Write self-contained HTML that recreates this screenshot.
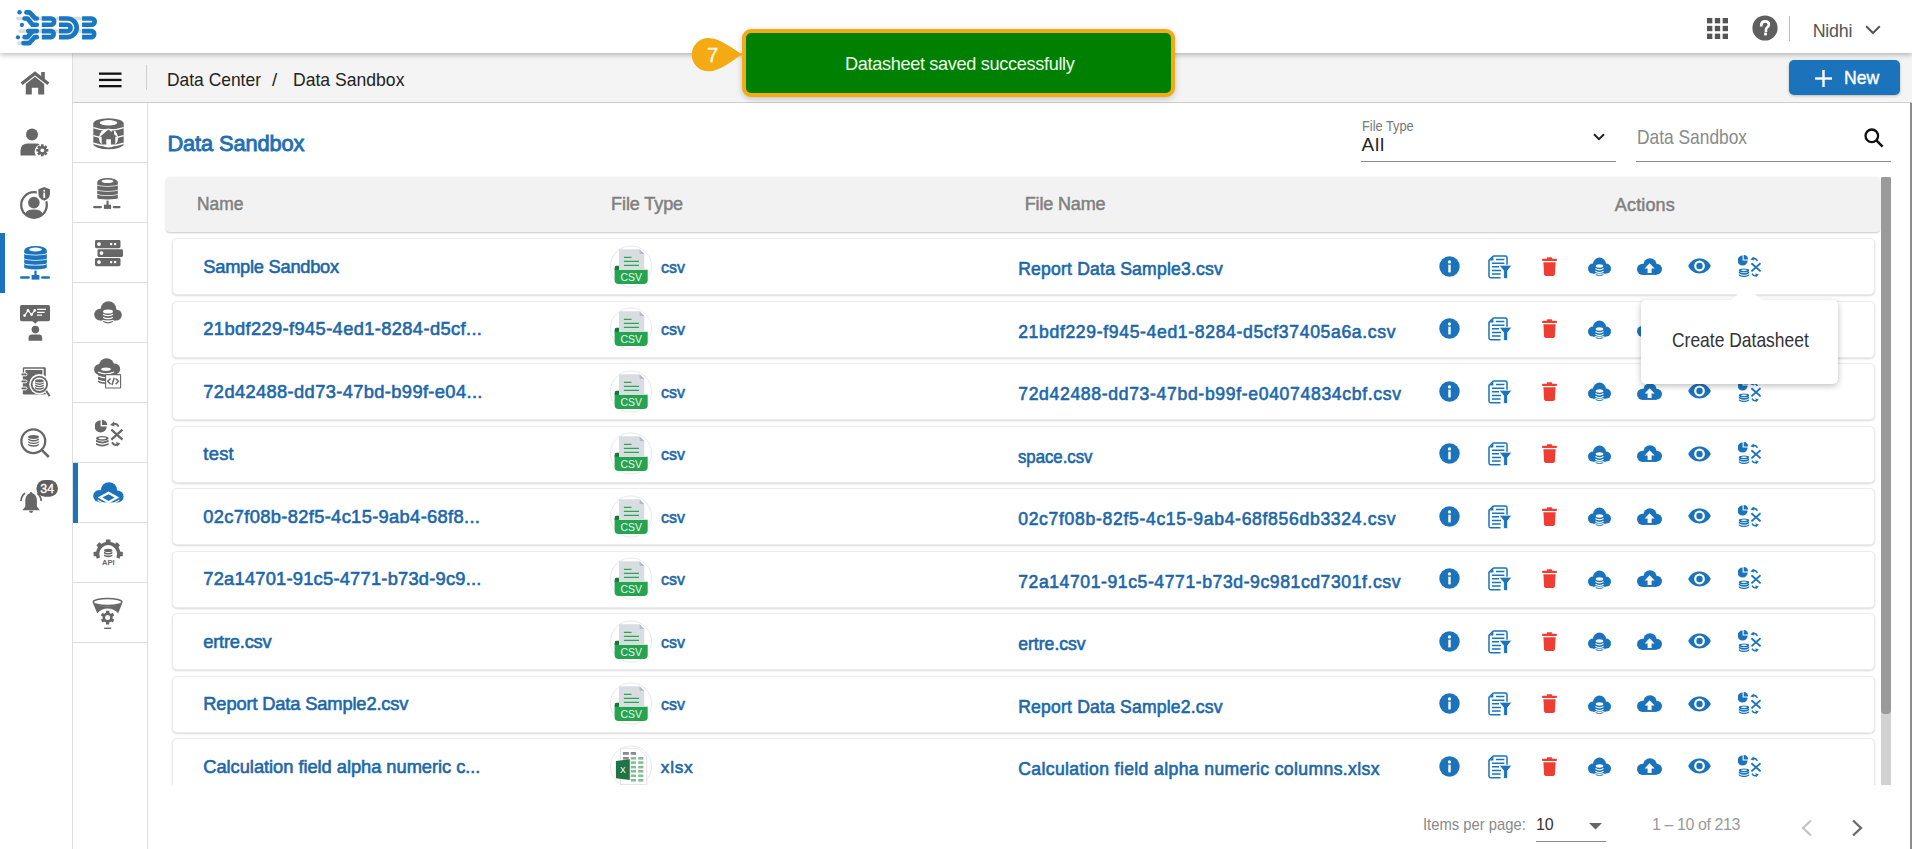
<!DOCTYPE html>
<html><head><meta charset="utf-8">
<style>
*{box-sizing:border-box;margin:0;padding:0}
html,body{width:1912px;height:849px;overflow:hidden;background:#fff;font-family:"Liberation Sans",sans-serif}
body{position:relative}
.a{position:absolute}
.t{position:absolute;white-space:nowrap;line-height:1}
svg{position:absolute;overflow:visible}
</style></head><body>

<svg width="0" height="0" style="position:absolute;left:0;top:0">
<defs>
<symbol id="i-info" viewBox="0 0 21 21"><circle cx="10.5" cy="10.5" r="10.2"/><circle cx="10.5" cy="5.9" r="1.6" fill="#fff"/><rect x="9.3" y="8.7" width="2.4" height="7.7" fill="#fff"/></symbol>
<symbol id="i-doc" viewBox="0 0 24 24"><path d="M5.2 1H17.4Q19 1 19 2.6V10.5M12.5 22.7H2.6Q1 22.7 1 21.1V5.2L5.2 1" fill="none" stroke="currentColor" stroke-width="1.5"/><path d="M1.6 5.4H5.4V1.6Z"/><g stroke="currentColor" stroke-width="1.5"><path d="M8 4.6H16.4M4 8.2H16.4M4 11.8H11M4 15.4H13M4 19H12.6"/></g><path d="M11 10.2H24L19.6 15.6V23.6H15.6V15.6Z" stroke="#fff" stroke-width="0.8"/></symbol>
<symbol id="i-trash" viewBox="0 0 15 19"><rect x="0" y="1.7" width="15" height="2.3" rx="1"/><rect x="4.8" y="0.2" width="5.4" height="2.2" rx="0.9"/><path d="M1.4 5.2H13.6L12.9 17.3Q12.8 19 11.1 19H3.9Q2.2 19 2.1 17.3Z"/></symbol>
<symbol id="i-clouddb" viewBox="0 0 23 19"><circle cx="11.5" cy="7" r="6.4"/><circle cx="5" cy="11.6" r="5"/><circle cx="18" cy="11.6" r="5"/><rect x="5" y="8" width="13" height="8.6"/><ellipse cx="11.5" cy="9" rx="3.8" ry="1.7" fill="#fff"/><path d="M7.5 11.6Q11.5 14.2 15.5 11.6M7.5 14.2Q11.5 16.8 15.5 14.2M7.5 16.6Q11.5 19.2 15.5 16.6" fill="none" stroke="#fff" stroke-width="1.2"/><path d="M7.7 17Q11.5 19.3 15.3 17V18Q11.5 19.8 7.7 18Z"/></symbol>
<symbol id="i-cloudup" viewBox="0 0 25 17"><circle cx="13" cy="7" r="6.8"/><circle cx="5.6" cy="11.3" r="5.6"/><circle cx="19.6" cy="11.1" r="5.4"/><rect x="5.6" y="8" width="14" height="8.9"/><path d="M12.6 5.2L7.6 10.4H10.6V15H14.6V10.4H17.6Z" fill="#fff"/></symbol>
<symbol id="i-eye" viewBox="0 0 23 16"><path d="M0.2 8C4.6 -1.9 18.4 -1.9 22.8 8C18.4 17.9 4.6 17.9 0.2 8Z"/><circle cx="11.5" cy="8" r="5.4" fill="#fff"/><circle cx="11.5" cy="8" r="3.2"/></symbol>
<symbol id="i-piedb" viewBox="0 0 23 22"><path d="M4.6 0.6A5 5 0 1 0 9.6 5.6H4.6Z"/><path d="M5.7 0.1V4.5H10.1A4.6 4.6 0 0 0 5.7 0.1Z"/><ellipse cx="6" cy="15.4" rx="5.2" ry="1.9"/><ellipse cx="6" cy="15.3" rx="3" ry="0.8" fill="#fff"/><path d="M0.8 16.6V18.2Q6 21.2 11.2 18.2V16.6Q6 19.6 0.8 16.6ZM0.8 19.2V20.6Q6 23.6 11.2 20.6V19.2Q6 22.2 0.8 19.2Z"/><path d="M13.4 8.2L22.6 16.4M22.6 8.2L13.4 16.4" stroke="currentColor" stroke-width="1.9"/><path d="M19.4 5.8Q17.8 2.6 14.6 3.6" fill="none" stroke="currentColor" stroke-width="1.5"/><path d="M12.4 4.4L15.6 1.6L16 5.6Z"/><path d="M14 18.6Q15.6 21.6 18.8 20.6" fill="none" stroke="currentColor" stroke-width="1.5"/><path d="M20.8 19.6L17.4 18.2L18.2 22Z"/></symbol>
<symbol id="i-csv" viewBox="0 0 42 43"><circle cx="21" cy="21.5" r="20.6" fill="#fff" stroke="#e3e3e3" stroke-width="0.8"/><path d="M9 4.3H29.6L34.3 9V24H9Z" fill="#d9dde2"/><path d="M29.6 4.3V9H34.3Z" fill="#b3bdc8"/><g stroke="#2aa655" stroke-width="1.3"><path d="M13.9 12.4H21.5M13.9 16.4H29M13.9 20.4H29"/></g><path d="M4.6 23Q4.6 20.8 6.4 20.8H9V25H4.6Z" fill="#17763b"/><path d="M4.6 24.8H37.7V35Q37.7 39 33.7 39H8.6Q4.6 39 4.6 35Z" fill="#26a350"/><text x="21.2" y="36.2" font-family="Liberation Sans" font-size="10.4" fill="#e9f7ec" text-anchor="middle">CSV</text></symbol>
<symbol id="i-xlsx" viewBox="0 0 42 43"><circle cx="21" cy="21.5" r="20.6" fill="#fff" stroke="#e3e3e3" stroke-width="0.8"/><path d="M10.4 3.3H28.4L36.7 11.6V39.6H10.4Z" fill="#fff" stroke="#d0d0d0" stroke-width="0.6"/><g fill="#8a8a8a"><rect x="13" y="7" width="5.8" height="2.8"/><rect x="20.8" y="7" width="5.2" height="2.8"/><rect x="13" y="12" width="5.8" height="2.6"/></g><g fill="#86bd98"><rect x="20.8" y="12" width="5.2" height="2.6"/><rect x="28.2" y="12" width="5.2" height="2.6"/><rect x="20.8" y="16.3" width="5.2" height="2.6"/><rect x="28.2" y="16.3" width="5.2" height="2.6"/><rect x="20.8" y="20.8" width="5.2" height="2.6"/><rect x="28.2" y="20.8" width="5.2" height="2.6"/><rect x="20.8" y="25" width="5.2" height="2.6"/><rect x="28.2" y="25" width="5.2" height="2.6"/><rect x="20.8" y="29.5" width="5.2" height="2.6"/><rect x="28.2" y="29.5" width="5.2" height="2.6"/><rect x="20.8" y="34" width="5.2" height="2.6"/><rect x="28.2" y="34" width="5.2" height="2.6"/></g><path d="M5.9 16L19.8 14.3V35L5.9 33.2Z" fill="#217346"/><text x="12.8" y="28.4" font-family="Liberation Sans" font-size="8.6" fill="#fff" text-anchor="middle">X</text></symbol>
</defs>
</svg>

<div class="a" style="left:0;top:53px;width:73px;height:796px;background:#fff;border-right:1px solid #dedede"></div>
<div class="a" style="left:73px;top:53px;width:1839px;height:50px;background:#f4f4f4;border-bottom:1px solid #cdcdcd"></div>
<div class="a" style="left:73px;top:103px;width:75px;height:746px;background:#fff;border-right:1px solid #dedede"></div>
<div class="a" style="left:73px;top:162px;width:74px;height:1px;background:#dedede"></div>
<div class="a" style="left:73px;top:222px;width:74px;height:1px;background:#dedede"></div>
<div class="a" style="left:73px;top:282px;width:74px;height:1px;background:#dedede"></div>
<div class="a" style="left:73px;top:342px;width:74px;height:1px;background:#dedede"></div>
<div class="a" style="left:73px;top:402px;width:74px;height:1px;background:#dedede"></div>
<div class="a" style="left:73px;top:462px;width:74px;height:1px;background:#dedede"></div>
<div class="a" style="left:73px;top:522px;width:74px;height:1px;background:#dedede"></div>
<div class="a" style="left:73px;top:582px;width:74px;height:1px;background:#dedede"></div>
<div class="a" style="left:73px;top:642px;width:74px;height:1px;background:#dedede"></div>
<div class="a" style="left:1910px;top:103px;width:2px;height:746px;background:#8c8c8c"></div>
<div class="a" style="left:0;top:233px;width:5px;height:60px;background:#1a73bb"></div>
<div class="a" style="left:73px;top:463px;width:5px;height:60px;background:#1a73bb"></div>
<div class="a" style="left:0;top:0;width:1912px;height:53px;background:#fff;box-shadow:0 2px 5px rgba(0,0,0,.25);z-index:3">
<svg style="left:10px;top:5px" width="100" height="45" viewBox="0 0 1887 849">
<g stroke="#dcdcdc" stroke-width="70" stroke-linecap="round" fill="none"><path d="M150 255H1330M190 492H1330M170 720H260"/></g>
<g stroke="#1a78c2" stroke-width="88" stroke-linejoin="round" fill="none">
<g stroke-linecap="round"><path d="M310 140H370L480 255H505"/><path d="M275 255H330L425 372H505"/><path d="M345 492H505"/><path d="M275 607H330L420 500"/><path d="M505 607H465L365 720H255"/></g>
<path d="M600 255H775A58.5 58.5 0 0 1 775 372H600"/><path d="M600 492H775A58.5 58.5 0 0 1 775 607H600"/>
<path d="M925 255H1083A176 176 0 0 1 1083 607H925"/><path d="M925 372H1083A60 60 0 0 1 1083 492H925"/>
<path d="M1360 255H1540A58.5 58.5 0 0 1 1540 372H1360"/><path d="M1360 492H1540A58.5 58.5 0 0 1 1540 607H1360"/>
</g>
<g fill="#1a78c2"><circle cx="180" cy="137" r="42"/><circle cx="225" cy="375" r="40"/><circle cx="150" cy="610" r="40"/></g>
</svg>

<svg style="left:1707px;top:18px" width="21" height="21" viewBox="0 0 20.4 20.4" fill="#555"><rect x="0.0" y="0.0" width="5.2" height="5.2"/><rect x="7.6" y="0.0" width="5.2" height="5.2"/><rect x="15.2" y="0.0" width="5.2" height="5.2"/><rect x="0.0" y="7.6" width="5.2" height="5.2"/><rect x="7.6" y="7.6" width="5.2" height="5.2"/><rect x="15.2" y="7.6" width="5.2" height="5.2"/><rect x="0.0" y="15.2" width="5.2" height="5.2"/><rect x="7.6" y="15.2" width="5.2" height="5.2"/><rect x="15.2" y="15.2" width="5.2" height="5.2"/></svg>
<svg style="left:1752px;top:15px" width="26" height="26" viewBox="0 0 26 26"><circle cx="13" cy="13" r="12.6" fill="#5f5f5f"/><path d="M9.2 10.2Q9.2 6.4 13.1 6.4Q16.9 6.4 16.9 9.6Q16.9 11.6 14.8 12.8Q14 13.3 14 14.6V15.6" fill="none" stroke="#fff" stroke-width="2.6" stroke-linecap="square"/><rect x="12.1" y="17.6" width="2.8" height="2.8" fill="#fff"/></svg>
<div class="a" style="left:1789px;top:16px;width:1px;height:25px;background:#bbb"></div>
<div class="t" style="left:1812.70px;top:22.67px;font-size:17.88px;letter-spacing:-0.236px;font-weight:normal;color:#555;">Nidhi</div>
<svg style="left:1865px;top:25px" width="16" height="10" viewBox="0 0 16 10"><path d="M1.2 1.2L8 8L14.8 1.2" fill="none" stroke="#555" stroke-width="2"/></svg>
</div>
<svg style="left:99px;top:72px" width="23" height="16" viewBox="0 0 23 16"><rect x="0" y="0.5" width="22.5" height="2.3" fill="#111"/><rect x="0" y="6.8" width="22.5" height="2.3" fill="#111"/><rect x="0" y="13" width="22.5" height="2.3" fill="#111"/></svg>
<div class="a" style="left:146px;top:65px;width:1px;height:25px;background:#d0d0d0"></div>
<div class="t" style="left:167.00px;top:71.05px;font-size:18.60px;letter-spacing:0.000px;font-weight:normal;color:#222;transform:scaleX(0.9370);transform-origin:0.00px 0;">Data Center</div>
<div class="t" style="left:272.00px;top:71.05px;font-size:18.60px;letter-spacing:0.000px;font-weight:normal;color:#222;">/</div>
<div class="t" style="left:292.50px;top:71.05px;font-size:18.60px;letter-spacing:0.000px;font-weight:normal;color:#222;transform:scaleX(0.9456);transform-origin:0.00px 0;">Data Sandbox</div>
<div class="a" style="left:1789px;top:60px;width:111px;height:35px;background:#1a73bb;border-radius:5px;box-shadow:0 1px 3px rgba(0,0,0,.25)"></div>
<svg style="left:1815px;top:70px" width="17" height="17" viewBox="0 0 17 17"><rect x="7.3" y="0" width="2.4" height="17" fill="#fff"/><rect x="0" y="7.3" width="17" height="2.4" fill="#fff"/></svg>
<div class="t" style="left:1844.00px;top:68.97px;font-size:18.46px;letter-spacing:0.000px;font-weight:normal;color:#fff;-webkit-text-stroke:0.4px #fff;transform:scaleX(0.9552);transform-origin:-0.20px 0;">New</div>
<div class="a" style="left:0;top:0;z-index:2">
</div>
<div class="a" style="left:0;top:0;z-index:2">
<!-- side1 home -->
<svg style="left:20px;top:71px" width="30" height="24" viewBox="0 0 30 24" fill="#676767"><path d="M1.6 12.8L15 2.4L28.4 12.8" fill="none" stroke="#676767" stroke-width="3.2"/><rect x="21.2" y="1" width="3.6" height="7.5"/><path d="M5.8 13L15 5.8L24.2 13V23.6H18.2V16.8H11.8V23.6H5.8Z"/></svg>
<!-- user gear -->
<svg style="left:20px;top:128px" width="29" height="29" viewBox="0 0 29 29" fill="#676767"><circle cx="12" cy="6.4" r="6"/><path d="M0.5 27.6V22.6Q0.5 15.6 8 15.6H16Q18.4 15.6 20 16.6A7.5 7.5 0 0 0 15.6 27.6Z"/><g transform="translate(22.3 22.3)"><circle r="6.6" fill="#fff"/><g fill="#676767"><circle r="4.4"/><rect x="-1.3" y="-6" width="2.6" height="12"/><rect x="-6" y="-1.3" width="12" height="2.6"/><rect x="-1.3" y="-6" width="2.6" height="12" transform="rotate(45)"/><rect x="-1.3" y="-6" width="2.6" height="12" transform="rotate(-45)"/></g><circle r="1.9" fill="#fff"/></g></svg>
<!-- shield user -->
<svg style="left:20px;top:187px" width="31" height="33" viewBox="0 0 31 33" fill="#676767"><circle cx="14" cy="18" r="12.8" fill="none" stroke="#676767" stroke-width="2.3"/><circle cx="13.9" cy="15.6" r="5.8"/><path d="M5 27Q6.6 22.6 13.9 22.6Q21.2 22.6 22.8 27Q19 31 13.9 31Q8.8 31 5 27Z"/><path d="M24.2 -1.4L31.6 1.4V6.4Q31.6 12.6 24.2 15.2Q16.8 12.6 16.8 6.4V1.4Z" fill="#fff"/><path d="M24.2 0L30 2.2V6.4Q30 11.6 24.2 13.7Q18.4 11.6 18.4 6.4V2.2Z"/><rect x="23.3" y="5.6" width="1.8" height="5.4" fill="#fff"/><circle cx="24.2" cy="3.8" r="1" fill="#fff"/></svg>
<!-- db network blue -->
<svg style="left:20px;top:246px" width="31.0" height="34.0" viewBox="0 0 31 34" fill="#1a73bb"><path d="M4.199999999999999 4.4A11.3 4.3 0 0 1 26.8 4.4V7.1A11.3 1.6 0 0 1 4.199999999999999 7.1Z"/><ellipse cx="15.5" cy="3.5" rx="6.4" ry="1.9" fill="#fff"/><path d="M4.199999999999999 7.9A11.3 1.6 0 0 0 26.8 7.9V12.4A11.3 1.6 0 0 1 4.199999999999999 12.4Z"/><path d="M4.199999999999999 13.2A11.3 1.6 0 0 0 26.8 13.2V17.2A11.3 1.6 0 0 1 4.199999999999999 17.2Z"/><path d="M4.199999999999999 18A11.3 1.6 0 0 0 26.8 18V21.6A11.3 1.8 0 0 1 4.199999999999999 21.6Z"/><rect x="14.4" y="24.6" width="2.2" height="5"/><rect x="11.6" y="29" width="7.8" height="4.6"/><rect x="0.1" y="30.3" width="9.7" height="2.5" rx="1.2"/><rect x="21.1" y="30.3" width="8.899999999999999" height="2.5" rx="1.2"/></svg>
<!-- presentation -->
<svg style="left:20px;top:305px" width="30" height="36" viewBox="0 0 30 36" fill="#676767"><rect x="0" y="0" width="30" height="16.2" rx="1.6"/><path d="M12.4 16H18L15.2 18.8Z"/><polyline points="4.6,10.6 8,5.4 11.6,9.6 14.8,5.4" fill="none" stroke="#fff" stroke-width="1.2"/><g fill="#fff"><circle cx="4.6" cy="10.6" r="1.4"/><circle cx="8" cy="5.4" r="1.4"/><circle cx="11.6" cy="9.6" r="1.4"/><circle cx="14.8" cy="5.4" r="1.4"/></g><path d="M17 4.4H26M17 7.3H24.6M17 10.2H22" stroke="#fff" stroke-width="1.3"/><circle cx="15.4" cy="24.6" r="3.8"/><path d="M8.6 35.8V33Q8.6 29.6 12 29.6H18.8Q22.2 29.6 22.2 33V35.8Z"/></svg>
<!-- notebook db magnifier -->
<svg style="left:21px;top:366px" width="30" height="33" viewBox="0 0 30 33" fill="#676767"><rect x="1.8" y="1.2" width="23" height="27.2" rx="1.2"/><path d="M3.8 7.6V3.4H22V10" fill="none" stroke="#fff" stroke-width="1.3"/><g stroke="#fff" stroke-width="1"><rect x="0" y="7" width="6" height="2.8" rx="1.4"/><rect x="0" y="14" width="6" height="2.8" rx="1.4"/><rect x="0" y="21" width="6" height="2.8" rx="1.4"/></g><circle cx="18.4" cy="18.3" r="10.2" fill="#fff"/><circle cx="18.4" cy="18.3" r="8.6"/><circle cx="18.4" cy="18.3" r="6.8" fill="#fff"/><ellipse cx="18.4" cy="14.8" rx="4.4" ry="1.6"/><path d="M14 16.2V17.6Q18.4 20.2 22.8 17.6V16.2Q18.4 18.8 14 16.2ZM14 18.6V20Q18.4 22.6 22.8 20V18.6Q18.4 21.2 14 18.6ZM14 21V22.4Q18.4 25 22.8 22.4V21Q18.4 23.6 14 21Z"/><path d="M25.6 25.2L29 30.6" stroke="#fff" stroke-width="3.6"/><path d="M25.2 24.8L28.6 30.2" stroke="#676767" stroke-width="2"/></svg>
<!-- magnifier db -->
<svg style="left:20px;top:427px" width="31" height="31" viewBox="0 0 31 31" fill="#676767"><circle cx="13.3" cy="14.2" r="11.9" fill="none" stroke="#676767" stroke-width="2.3"/><path d="M22 23.2L28.8 30" stroke="#676767" stroke-width="2.5"/><ellipse cx="13.5" cy="10" rx="5.4" ry="1.9"/><path d="M8.1 11.6V13Q13.5 16 18.9 13V11.6Q13.5 14.6 8.1 11.6ZM8.1 14.2V15.6Q13.5 18.6 18.9 15.6V14.2Q13.5 17.2 8.1 14.2ZM8.1 16.8V18.2Q13.5 21.2 18.9 18.2V16.8Q13.5 19.8 8.1 16.8Z"/></svg>
<!-- bell with badge -->
<svg style="left:19px;top:479px" width="40" height="36" viewBox="0 0 40 36" fill="#676767"><path d="M12.1 13Q11 13 10.7 14.3Q6.6 15.6 6.3 21.4V27.4L3.4 31.2H20.8L17.9 27.4V21.4Q17.6 15.6 13.5 14.3Q13.2 13 12.1 13Z"/><path d="M10 31.8H14.2A2.1 2.1 0 0 1 10 31.8Z"/><path d="M6 14.2Q2.4 16.8 1.9 22M18.2 14.2Q21.8 16.8 22.3 22" fill="none" stroke="#676767" stroke-width="1.7"/><rect x="17.4" y="1.1" width="21.5" height="16.6" rx="8.3" fill="#5e5e5e"/><text x="28.2" y="14.2" font-family="Liberation Sans" font-size="12.4" fill="#fff" stroke="#fff" stroke-width="0.35" text-anchor="middle">34</text></svg>

<!-- side2: db house -->
<svg style="left:92.5px;top:117.5px" width="31" height="32" viewBox="0 0 31 32" fill="#676767"><path d="M0.3 5.6A15.2 5.4 0 0 1 30.7 5.6V26A15.2 5.2 0 0 1 0.3 26Z"/><ellipse cx="15.5" cy="4.8" rx="8.8" ry="2.7" fill="#fff"/><path d="M0.3 9.6Q15.5 15 30.7 9.6M0.3 17.6Q15.5 23 30.7 17.6M0.3 25.2Q15.5 30.6 30.7 25.2" fill="none" stroke="#fff" stroke-width="1.5"/><circle cx="15.5" cy="20" r="9.6" fill="#fff"/><path d="M15.5 11.4L24 18.8H22.3V26.4H17.9V21.2H13.3V26.4H8.7V18.8H7Z"/><rect x="18.6" y="12.6" width="2.4" height="4"/></svg>
<!-- db network -->
<svg style="left:92.5px;top:177.5px" width="28.5" height="31.3" viewBox="0 0 31 34" fill="#676767"><path d="M4.600000000000001 4.4A11.2 4.3 0 0 1 27.0 4.4V7.1A11.2 1.6 0 0 1 4.600000000000001 7.1Z"/><ellipse cx="15.8" cy="3.5" rx="6.4" ry="1.9" fill="#fff"/><path d="M4.600000000000001 7.9A11.2 1.6 0 0 0 27.0 7.9V12.4A11.2 1.6 0 0 1 4.600000000000001 12.4Z"/><path d="M4.600000000000001 13.2A11.2 1.6 0 0 0 27.0 13.2V17.2A11.2 1.6 0 0 1 4.600000000000001 17.2Z"/><path d="M4.600000000000001 18A11.2 1.6 0 0 0 27.0 18V21.6A11.2 1.8 0 0 1 4.600000000000001 21.6Z"/><rect x="14.700000000000001" y="24.6" width="2.2" height="5"/><rect x="11.9" y="29" width="7.8" height="4.6"/><rect x="0.1" y="30.3" width="9.7" height="2.5" rx="1.2"/><rect x="21.4" y="30.3" width="8.600000000000001" height="2.5" rx="1.2"/></svg>
<!-- server -->
<svg style="left:95px;top:240px" width="28" height="27" viewBox="0 0 28 27" fill="#676767"><rect x="0" y="0" width="25.5" height="8.2" rx="1.4"/><rect x="2.5" y="9.2" width="25.5" height="7.8" rx="1.4"/><rect x="0" y="18" width="25.5" height="8.2" rx="1.4"/><g fill="#fff"><circle cx="4" cy="4.1" r="1.9"/><circle cx="6.5" cy="13.1" r="1.9"/><circle cx="4" cy="22.1" r="1.9"/><rect x="15" y="3" width="2.2" height="2.2"/><rect x="19" y="3" width="2.2" height="2.2"/><rect x="15" y="21" width="2.2" height="2.2"/><rect x="19" y="21" width="2.2" height="2.2"/></g></svg>
<!-- cloud db -->
<svg style="left:94px;top:301px" width="28" height="24" viewBox="0 0 28 24" fill="#676767"><circle cx="14.5" cy="8" r="7.8"/><circle cx="6" cy="13.6" r="5.8"/><circle cx="22.2" cy="14" r="5.6"/><rect x="6" y="10" width="16" height="9.4"/><ellipse cx="14" cy="10.6" rx="5" ry="2" fill="#fff"/><path d="M9 13.2Q14 16.2 19 13.2M9 16.2Q14 19.2 19 16.2M9 19.2Q14 22.2 19 19.2" fill="none" stroke="#fff" stroke-width="1.3"/><path d="M9.2 19.8Q14 22.6 18.8 19.8V21Q14 23.8 9.2 21Z"/></svg>
<!-- cloud code -->
<svg style="left:94px;top:358px" width="28" height="32" viewBox="0 0 28 32" fill="#676767"><circle cx="12.6" cy="7.6" r="7.4"/><circle cx="5.6" cy="11.4" r="5.5"/><circle cx="20.8" cy="11" r="5.4"/><rect x="5.6" y="9" width="15.2" height="7.8"/><path d="M4 11.4A8 2.6 0 0 1 20 11.4V23.4A8 2.6 0 0 1 4 23.4Z"/><ellipse cx="12" cy="11.2" rx="4.8" ry="1.7" fill="#fff"/><path d="M4 14Q12 17.6 20 14M4 18Q12 21.6 20 18M4 22Q12 25.6 20 22" fill="none" stroke="#fff" stroke-width="1.2"/><rect x="11.6" y="16.6" width="15" height="13.4" rx="0.6" fill="#fff" stroke="#676767" stroke-width="1.1"/><path d="M16.6 20.4L13.8 23.3L16.6 26.2M21.6 20.4L24.4 23.3L21.6 26.2M20.2 19.8L18 27" fill="none" stroke="#676767" stroke-width="1.5"/></svg>
<!-- pie db x -->
<svg style="left:94.5px;top:418.5px" width="28" height="28" viewBox="0 0 23 23" fill="#676767" color="#676767"><use href="#i-piedb"/></svg>
<!-- cloud layer blue -->
<svg style="left:93px;top:482px" width="31" height="25" viewBox="0 0 31 25" fill="#1a73bb"><circle cx="16" cy="8.4" r="8.2"/><circle cx="6.2" cy="14" r="6"/><circle cx="24.6" cy="14.4" r="6"/><rect x="6.2" y="12" width="18.4" height="8.4"/><path d="M15.5 9.6L26.4 15.6L15.5 21.6L4.6 15.6Z" fill="#fff"/><path d="M15.5 12.2L21.6 15.6L15.5 19L9.4 15.6Z"/><path d="M4.6 17.4L15.5 23.4L26.4 17.4V18.8L15.5 24.8L4.6 18.8Z" fill="#fff"/></svg>
<!-- gear api -->
<svg style="left:93px;top:538.5px" width="31" height="28" viewBox="0 0 31 28" fill="#676767"><g transform="translate(15.2 15)"><circle r="10.6" fill="none" stroke="#676767" stroke-width="3.4" stroke-dasharray="41.5 100" transform="rotate(157)"/><rect x="-2.3" y="-14.6" width="4.6" height="5" rx="0.6"/><rect x="-2.3" y="-14.6" width="4.6" height="5" rx="0.6" transform="rotate(45)"/><rect x="-2.3" y="-14.6" width="4.6" height="5" rx="0.6" transform="rotate(-45)"/><rect x="-2.3" y="-14.6" width="4.6" height="5" rx="0.6" transform="rotate(90)"/><rect x="-2.3" y="-14.6" width="4.6" height="5" rx="0.6" transform="rotate(-90)"/></g><ellipse cx="15.2" cy="11.4" rx="4.2" ry="1.7"/><path d="M11 12.8V14.4Q15.2 16.8 19.4 14.4V12.8Q15.2 15.2 11 12.8ZM11 15.4V17Q15.2 19.4 19.4 17V15.4Q15.2 17.8 11 15.4Z"/><text x="15.4" y="25.9" font-family="Liberation Sans" font-size="7.6" font-weight="bold" fill="#676767" text-anchor="middle">API</text></svg>
<!-- funnel gear -->
<svg style="left:92px;top:597.5px" width="31" height="32" viewBox="0 0 31 32" fill="#676767"><path d="M1 5.2Q15.6 11.4 30.2 5.2L26.2 15.3A13.9 13.9 0 0 0 5.2 15.3Z"/><ellipse cx="15.6" cy="4" rx="14.4" ry="3.5" fill="#fff" stroke="#676767" stroke-width="1.4"/><g transform="translate(15.6 19.6)"><circle r="5"/><rect x="-1.6" y="-6.9" width="3.2" height="13.8" rx="0.5"/><rect x="-1.6" y="-6.9" width="3.2" height="13.8" rx="0.5" transform="rotate(60)"/><rect x="-1.6" y="-6.9" width="3.2" height="13.8" rx="0.5" transform="rotate(-60)"/><circle r="2.5" fill="#fff"/></g><rect x="12.2" y="29.6" width="7" height="1.4"/></svg>
</div>

<div class="t" style="left:167.45px;top:132.94px;font-size:21.80px;letter-spacing:-0.098px;font-weight:normal;color:#1f70b4;-webkit-text-stroke:0.9px #1f70b4;">Data Sandbox</div>
<div class="t" style="left:1361.50px;top:118.50px;font-size:14.53px;letter-spacing:0.000px;font-weight:normal;color:#777;transform:scaleX(0.8824);transform-origin:0.00px 0;">File Type</div>
<div class="t" style="left:1361.50px;top:136.31px;font-size:18.90px;letter-spacing:0.904px;font-weight:normal;color:#222;">All</div>
<svg style="left:1593px;top:133px" width="12" height="8" viewBox="0 0 12 8"><path d="M1 1.2L6 6.2L11 1.2" fill="none" stroke="#222" stroke-width="2"/></svg>
<div class="a" style="left:1361px;top:161px;width:255px;height:1px;background:#8a8a8a"></div>
<div class="t" style="left:1636.70px;top:127.71px;font-size:19.48px;letter-spacing:0.000px;font-weight:normal;color:#8a8a8a;transform:scaleX(0.8919);transform-origin:0.00px 0;">Data Sandbox</div>
<svg style="left:1864px;top:128px" width="20" height="20" viewBox="0 0 20 20"><circle cx="7.8" cy="7.8" r="6.3" fill="none" stroke="#111" stroke-width="2.3"/><path d="M12.4 12.4L18.6 18.6" stroke="#111" stroke-width="2.6"/></svg>
<div class="a" style="left:1636px;top:161px;width:255px;height:1px;background:#8a8a8a"></div>
<div class="a" style="left:166px;top:177px;width:1714px;height:55px;background:#f2f2f2;border-radius:4px;box-shadow:0 1px 2px rgba(0,0,0,.22)"></div>
<div class="t" style="left:197.05px;top:195.21px;font-size:18.90px;letter-spacing:0.000px;font-weight:normal;color:#808080;-webkit-text-stroke:0.5px #808080;transform:scaleX(0.9192);transform-origin:-0.25px 0;">Name</div>
<div class="t" style="left:611.05px;top:195.24px;font-size:18.02px;letter-spacing:-0.087px;font-weight:normal;color:#808080;-webkit-text-stroke:0.5px #808080;">File Type</div>
<div class="t" style="left:1024.75px;top:195.44px;font-size:18.02px;letter-spacing:-0.166px;font-weight:normal;color:#808080;-webkit-text-stroke:0.5px #808080;">File Name</div>
<div class="t" style="left:1614.85px;top:196.24px;font-size:18.02px;letter-spacing:0.134px;font-weight:normal;color:#808080;-webkit-text-stroke:0.5px #808080;">Actions</div>
<div class="a" style="left:1881px;top:177px;width:10px;height:608px;background:#d2d2d2"></div>
<div class="a" style="left:1881px;top:177px;width:10px;height:537px;background:#9a9a9a;border-radius:2px 2px 4px 4px"></div>
<div class="a" style="left:0;top:0;width:1912px;height:785px;overflow:hidden">
<div class="a" style="left:172px;top:238.0px;width:1703px;height:57px;background:#fff;border:1px solid #ececec;border-radius:5px;box-shadow:0 1px 2px rgba(0,0,0,.15)"></div>
<div class="t" style="left:203.30px;top:257.80px;font-size:18.31px;letter-spacing:-0.268px;font-weight:normal;color:#1c67a9;-webkit-text-stroke:0.6px #1c67a9;">Sample Sandbox</div>
<svg style="left:610px;top:244.5px" width="42" height="43"><use href="#i-csv"/></svg>
<div class="t" style="left:660.80px;top:258.74px;font-size:17.20px;letter-spacing:0.000px;font-weight:normal;color:#1c67a9;-webkit-text-stroke:0.6px #1c67a9;transform:scaleX(0.9280);transform-origin:-0.30px 0;">csv</div>
<div class="t" style="left:1018.20px;top:261.21px;font-size:17.59px;letter-spacing:0.196px;font-weight:normal;color:#1c67a9;-webkit-text-stroke:0.6px #1c67a9;">Report Data Sample3.csv</div>
<svg style="left:1439px;top:255.7px" width="21" height="21" fill="#1a73bb"><use href="#i-info"/></svg>
<svg style="left:1487.5px;top:254.5px" width="24" height="24" fill="#1a73bb" color="#1a73bb"><use href="#i-doc"/></svg>
<svg style="left:1541.5px;top:256.5px" width="15" height="19" fill="#ee3e33"><use href="#i-trash"/></svg>
<svg style="left:1588px;top:257.0px" width="23" height="19" fill="#1a73bb"><use href="#i-clouddb"/></svg>
<svg style="left:1636.7px;top:257.7px" width="25" height="17" fill="#1a73bb"><use href="#i-cloudup"/></svg>
<svg style="left:1688px;top:258.2px" width="23" height="16" fill="#1a73bb"><use href="#i-eye"/></svg>
<svg style="left:1738px;top:254.5px" width="23" height="22" fill="#1a73bb" color="#1a73bb"><use href="#i-piedb"/></svg>
<div class="a" style="left:172px;top:300.5px;width:1703px;height:57px;background:#fff;border:1px solid #ececec;border-radius:5px;box-shadow:0 1px 2px rgba(0,0,0,.15)"></div>
<div class="t" style="left:203.30px;top:320.30px;font-size:18.31px;letter-spacing:0.370px;font-weight:normal;color:#1c67a9;-webkit-text-stroke:0.6px #1c67a9;">21bdf229-f945-4ed1-8284-d5cf...</div>
<svg style="left:610px;top:307.0px" width="42" height="43"><use href="#i-csv"/></svg>
<div class="t" style="left:660.80px;top:321.24px;font-size:17.20px;letter-spacing:0.000px;font-weight:normal;color:#1c67a9;-webkit-text-stroke:0.6px #1c67a9;transform:scaleX(0.9280);transform-origin:-0.30px 0;">csv</div>
<div class="t" style="left:1018.20px;top:323.71px;font-size:17.59px;letter-spacing:0.653px;font-weight:normal;color:#1c67a9;-webkit-text-stroke:0.6px #1c67a9;">21bdf229-f945-4ed1-8284-d5cf37405a6a.csv</div>
<svg style="left:1439px;top:318.2px" width="21" height="21" fill="#1a73bb"><use href="#i-info"/></svg>
<svg style="left:1487.5px;top:317.0px" width="24" height="24" fill="#1a73bb" color="#1a73bb"><use href="#i-doc"/></svg>
<svg style="left:1541.5px;top:319.0px" width="15" height="19" fill="#ee3e33"><use href="#i-trash"/></svg>
<svg style="left:1588px;top:319.5px" width="23" height="19" fill="#1a73bb"><use href="#i-clouddb"/></svg>
<svg style="left:1636.7px;top:320.2px" width="25" height="17" fill="#1a73bb"><use href="#i-cloudup"/></svg>
<svg style="left:1688px;top:320.7px" width="23" height="16" fill="#1a73bb"><use href="#i-eye"/></svg>
<svg style="left:1738px;top:317.0px" width="23" height="22" fill="#1a73bb" color="#1a73bb"><use href="#i-piedb"/></svg>
<div class="a" style="left:172px;top:363.0px;width:1703px;height:57px;background:#fff;border:1px solid #ececec;border-radius:5px;box-shadow:0 1px 2px rgba(0,0,0,.15)"></div>
<div class="t" style="left:203.30px;top:382.80px;font-size:18.31px;letter-spacing:0.364px;font-weight:normal;color:#1c67a9;-webkit-text-stroke:0.6px #1c67a9;">72d42488-dd73-47bd-b99f-e04...</div>
<svg style="left:610px;top:369.5px" width="42" height="43"><use href="#i-csv"/></svg>
<div class="t" style="left:660.80px;top:383.74px;font-size:17.20px;letter-spacing:0.000px;font-weight:normal;color:#1c67a9;-webkit-text-stroke:0.6px #1c67a9;transform:scaleX(0.9280);transform-origin:-0.30px 0;">csv</div>
<div class="t" style="left:1018.20px;top:386.21px;font-size:17.59px;letter-spacing:0.669px;font-weight:normal;color:#1c67a9;-webkit-text-stroke:0.6px #1c67a9;">72d42488-dd73-47bd-b99f-e04074834cbf.csv</div>
<svg style="left:1439px;top:380.7px" width="21" height="21" fill="#1a73bb"><use href="#i-info"/></svg>
<svg style="left:1487.5px;top:379.5px" width="24" height="24" fill="#1a73bb" color="#1a73bb"><use href="#i-doc"/></svg>
<svg style="left:1541.5px;top:381.5px" width="15" height="19" fill="#ee3e33"><use href="#i-trash"/></svg>
<svg style="left:1588px;top:382.0px" width="23" height="19" fill="#1a73bb"><use href="#i-clouddb"/></svg>
<svg style="left:1636.7px;top:382.7px" width="25" height="17" fill="#1a73bb"><use href="#i-cloudup"/></svg>
<svg style="left:1688px;top:383.2px" width="23" height="16" fill="#1a73bb"><use href="#i-eye"/></svg>
<svg style="left:1738px;top:379.5px" width="23" height="22" fill="#1a73bb" color="#1a73bb"><use href="#i-piedb"/></svg>
<div class="a" style="left:172px;top:425.5px;width:1703px;height:57px;background:#fff;border:1px solid #ececec;border-radius:5px;box-shadow:0 1px 2px rgba(0,0,0,.15)"></div>
<div class="t" style="left:203.30px;top:445.30px;font-size:18.31px;letter-spacing:0.293px;font-weight:normal;color:#1c67a9;-webkit-text-stroke:0.6px #1c67a9;">test</div>
<svg style="left:610px;top:432.0px" width="42" height="43"><use href="#i-csv"/></svg>
<div class="t" style="left:660.80px;top:446.24px;font-size:17.20px;letter-spacing:0.000px;font-weight:normal;color:#1c67a9;-webkit-text-stroke:0.6px #1c67a9;transform:scaleX(0.9280);transform-origin:-0.30px 0;">csv</div>
<div class="t" style="left:1018.20px;top:448.71px;font-size:17.59px;letter-spacing:0.000px;font-weight:normal;color:#1c67a9;-webkit-text-stroke:0.6px #1c67a9;transform:scaleX(0.9531);transform-origin:-0.30px 0;">space.csv</div>
<svg style="left:1439px;top:443.2px" width="21" height="21" fill="#1a73bb"><use href="#i-info"/></svg>
<svg style="left:1487.5px;top:442.0px" width="24" height="24" fill="#1a73bb" color="#1a73bb"><use href="#i-doc"/></svg>
<svg style="left:1541.5px;top:444.0px" width="15" height="19" fill="#ee3e33"><use href="#i-trash"/></svg>
<svg style="left:1588px;top:444.5px" width="23" height="19" fill="#1a73bb"><use href="#i-clouddb"/></svg>
<svg style="left:1636.7px;top:445.2px" width="25" height="17" fill="#1a73bb"><use href="#i-cloudup"/></svg>
<svg style="left:1688px;top:445.7px" width="23" height="16" fill="#1a73bb"><use href="#i-eye"/></svg>
<svg style="left:1738px;top:442.0px" width="23" height="22" fill="#1a73bb" color="#1a73bb"><use href="#i-piedb"/></svg>
<div class="a" style="left:172px;top:488.0px;width:1703px;height:57px;background:#fff;border:1px solid #ececec;border-radius:5px;box-shadow:0 1px 2px rgba(0,0,0,.15)"></div>
<div class="t" style="left:203.30px;top:507.80px;font-size:18.31px;letter-spacing:0.338px;font-weight:normal;color:#1c67a9;-webkit-text-stroke:0.6px #1c67a9;">02c7f08b-82f5-4c15-9ab4-68f8...</div>
<svg style="left:610px;top:494.5px" width="42" height="43"><use href="#i-csv"/></svg>
<div class="t" style="left:660.80px;top:508.74px;font-size:17.20px;letter-spacing:0.000px;font-weight:normal;color:#1c67a9;-webkit-text-stroke:0.6px #1c67a9;transform:scaleX(0.9280);transform-origin:-0.30px 0;">csv</div>
<div class="t" style="left:1018.20px;top:511.21px;font-size:17.59px;letter-spacing:0.678px;font-weight:normal;color:#1c67a9;-webkit-text-stroke:0.6px #1c67a9;">02c7f08b-82f5-4c15-9ab4-68f856db3324.csv</div>
<svg style="left:1439px;top:505.7px" width="21" height="21" fill="#1a73bb"><use href="#i-info"/></svg>
<svg style="left:1487.5px;top:504.5px" width="24" height="24" fill="#1a73bb" color="#1a73bb"><use href="#i-doc"/></svg>
<svg style="left:1541.5px;top:506.5px" width="15" height="19" fill="#ee3e33"><use href="#i-trash"/></svg>
<svg style="left:1588px;top:507.0px" width="23" height="19" fill="#1a73bb"><use href="#i-clouddb"/></svg>
<svg style="left:1636.7px;top:507.7px" width="25" height="17" fill="#1a73bb"><use href="#i-cloudup"/></svg>
<svg style="left:1688px;top:508.2px" width="23" height="16" fill="#1a73bb"><use href="#i-eye"/></svg>
<svg style="left:1738px;top:504.5px" width="23" height="22" fill="#1a73bb" color="#1a73bb"><use href="#i-piedb"/></svg>
<div class="a" style="left:172px;top:550.5px;width:1703px;height:57px;background:#fff;border:1px solid #ececec;border-radius:5px;box-shadow:0 1px 2px rgba(0,0,0,.15)"></div>
<div class="t" style="left:203.30px;top:570.30px;font-size:18.31px;letter-spacing:0.225px;font-weight:normal;color:#1c67a9;-webkit-text-stroke:0.6px #1c67a9;">72a14701-91c5-4771-b73d-9c9...</div>
<svg style="left:610px;top:557.0px" width="42" height="43"><use href="#i-csv"/></svg>
<div class="t" style="left:660.80px;top:571.24px;font-size:17.20px;letter-spacing:0.000px;font-weight:normal;color:#1c67a9;-webkit-text-stroke:0.6px #1c67a9;transform:scaleX(0.9280);transform-origin:-0.30px 0;">csv</div>
<div class="t" style="left:1018.20px;top:573.71px;font-size:17.59px;letter-spacing:0.581px;font-weight:normal;color:#1c67a9;-webkit-text-stroke:0.6px #1c67a9;">72a14701-91c5-4771-b73d-9c981cd7301f.csv</div>
<svg style="left:1439px;top:568.2px" width="21" height="21" fill="#1a73bb"><use href="#i-info"/></svg>
<svg style="left:1487.5px;top:567.0px" width="24" height="24" fill="#1a73bb" color="#1a73bb"><use href="#i-doc"/></svg>
<svg style="left:1541.5px;top:569.0px" width="15" height="19" fill="#ee3e33"><use href="#i-trash"/></svg>
<svg style="left:1588px;top:569.5px" width="23" height="19" fill="#1a73bb"><use href="#i-clouddb"/></svg>
<svg style="left:1636.7px;top:570.2px" width="25" height="17" fill="#1a73bb"><use href="#i-cloudup"/></svg>
<svg style="left:1688px;top:570.7px" width="23" height="16" fill="#1a73bb"><use href="#i-eye"/></svg>
<svg style="left:1738px;top:567.0px" width="23" height="22" fill="#1a73bb" color="#1a73bb"><use href="#i-piedb"/></svg>
<div class="a" style="left:172px;top:613.0px;width:1703px;height:57px;background:#fff;border:1px solid #ececec;border-radius:5px;box-shadow:0 1px 2px rgba(0,0,0,.15)"></div>
<div class="t" style="left:203.30px;top:632.80px;font-size:18.31px;letter-spacing:-0.227px;font-weight:normal;color:#1c67a9;-webkit-text-stroke:0.6px #1c67a9;">ertre.csv</div>
<svg style="left:610px;top:619.5px" width="42" height="43"><use href="#i-csv"/></svg>
<div class="t" style="left:660.80px;top:633.74px;font-size:17.20px;letter-spacing:0.000px;font-weight:normal;color:#1c67a9;-webkit-text-stroke:0.6px #1c67a9;transform:scaleX(0.9280);transform-origin:-0.30px 0;">csv</div>
<div class="t" style="left:1018.20px;top:636.21px;font-size:17.59px;letter-spacing:0.009px;font-weight:normal;color:#1c67a9;-webkit-text-stroke:0.6px #1c67a9;">ertre.csv</div>
<svg style="left:1439px;top:630.7px" width="21" height="21" fill="#1a73bb"><use href="#i-info"/></svg>
<svg style="left:1487.5px;top:629.5px" width="24" height="24" fill="#1a73bb" color="#1a73bb"><use href="#i-doc"/></svg>
<svg style="left:1541.5px;top:631.5px" width="15" height="19" fill="#ee3e33"><use href="#i-trash"/></svg>
<svg style="left:1588px;top:632.0px" width="23" height="19" fill="#1a73bb"><use href="#i-clouddb"/></svg>
<svg style="left:1636.7px;top:632.7px" width="25" height="17" fill="#1a73bb"><use href="#i-cloudup"/></svg>
<svg style="left:1688px;top:633.2px" width="23" height="16" fill="#1a73bb"><use href="#i-eye"/></svg>
<svg style="left:1738px;top:629.5px" width="23" height="22" fill="#1a73bb" color="#1a73bb"><use href="#i-piedb"/></svg>
<div class="a" style="left:172px;top:675.5px;width:1703px;height:57px;background:#fff;border:1px solid #ececec;border-radius:5px;box-shadow:0 1px 2px rgba(0,0,0,.15)"></div>
<div class="t" style="left:203.30px;top:695.30px;font-size:18.31px;letter-spacing:-0.149px;font-weight:normal;color:#1c67a9;-webkit-text-stroke:0.6px #1c67a9;">Report Data Sample2.csv</div>
<svg style="left:610px;top:682.0px" width="42" height="43"><use href="#i-csv"/></svg>
<div class="t" style="left:660.80px;top:696.24px;font-size:17.20px;letter-spacing:0.000px;font-weight:normal;color:#1c67a9;-webkit-text-stroke:0.6px #1c67a9;transform:scaleX(0.9280);transform-origin:-0.30px 0;">csv</div>
<div class="t" style="left:1018.20px;top:698.71px;font-size:17.59px;letter-spacing:0.187px;font-weight:normal;color:#1c67a9;-webkit-text-stroke:0.6px #1c67a9;">Report Data Sample2.csv</div>
<svg style="left:1439px;top:693.2px" width="21" height="21" fill="#1a73bb"><use href="#i-info"/></svg>
<svg style="left:1487.5px;top:692.0px" width="24" height="24" fill="#1a73bb" color="#1a73bb"><use href="#i-doc"/></svg>
<svg style="left:1541.5px;top:694.0px" width="15" height="19" fill="#ee3e33"><use href="#i-trash"/></svg>
<svg style="left:1588px;top:694.5px" width="23" height="19" fill="#1a73bb"><use href="#i-clouddb"/></svg>
<svg style="left:1636.7px;top:695.2px" width="25" height="17" fill="#1a73bb"><use href="#i-cloudup"/></svg>
<svg style="left:1688px;top:695.7px" width="23" height="16" fill="#1a73bb"><use href="#i-eye"/></svg>
<svg style="left:1738px;top:692.0px" width="23" height="22" fill="#1a73bb" color="#1a73bb"><use href="#i-piedb"/></svg>
<div class="a" style="left:172px;top:738.0px;width:1703px;height:57px;background:#fff;border:1px solid #ececec;border-radius:5px;box-shadow:0 1px 2px rgba(0,0,0,.15)"></div>
<div class="t" style="left:203.30px;top:757.80px;font-size:18.31px;letter-spacing:-0.043px;font-weight:normal;color:#1c67a9;-webkit-text-stroke:0.6px #1c67a9;">Calculation field alpha numeric c...</div>
<svg style="left:610px;top:744.5px" width="42" height="43"><use href="#i-xlsx"/></svg>
<div class="t" style="left:660.80px;top:758.74px;font-size:17.20px;letter-spacing:0.761px;font-weight:normal;color:#1c67a9;-webkit-text-stroke:0.6px #1c67a9;">xlsx</div>
<div class="t" style="left:1018.20px;top:761.21px;font-size:17.59px;letter-spacing:0.382px;font-weight:normal;color:#1c67a9;-webkit-text-stroke:0.6px #1c67a9;">Calculation field alpha numeric columns.xlsx</div>
<svg style="left:1439px;top:755.7px" width="21" height="21" fill="#1a73bb"><use href="#i-info"/></svg>
<svg style="left:1487.5px;top:754.5px" width="24" height="24" fill="#1a73bb" color="#1a73bb"><use href="#i-doc"/></svg>
<svg style="left:1541.5px;top:756.5px" width="15" height="19" fill="#ee3e33"><use href="#i-trash"/></svg>
<svg style="left:1588px;top:757.0px" width="23" height="19" fill="#1a73bb"><use href="#i-clouddb"/></svg>
<svg style="left:1636.7px;top:757.7px" width="25" height="17" fill="#1a73bb"><use href="#i-cloudup"/></svg>
<svg style="left:1688px;top:758.2px" width="23" height="16" fill="#1a73bb"><use href="#i-eye"/></svg>
<svg style="left:1738px;top:754.5px" width="23" height="22" fill="#1a73bb" color="#1a73bb"><use href="#i-piedb"/></svg>
</div>
<div class="a" style="left:1641px;top:300px;width:197px;height:84px;background:#fff;border-radius:5px;box-shadow:0 2px 6px rgba(0,0,0,.25);z-index:4"></div>
<svg style="left:1730px;top:287px;z-index:5" width="33" height="14" viewBox="0 0 33 14"><path d="M0 13.5L16.5 0.5L33 13.5Z" fill="#fff"/></svg>
<div class="a" style="left:0;top:0;z-index:6"><div class="t" style="left:1671.80px;top:331.39px;font-size:19.62px;letter-spacing:0.000px;font-weight:normal;color:#333;transform:scaleX(0.8901);transform-origin:0.00px 0;">Create Datasheet</div></div>
<div class="t" style="left:1422.80px;top:817.07px;font-size:15.99px;letter-spacing:0.000px;font-weight:normal;color:#8a8a8a;transform:scaleX(0.9263);transform-origin:0.00px 0;">Items per page:</div>
<div class="t" style="left:1536.00px;top:817.07px;font-size:15.99px;letter-spacing:-0.079px;font-weight:normal;color:#333;">10</div>
<svg style="left:1589px;top:823px" width="13" height="7" viewBox="0 0 13 7"><path d="M0 0H13L6.5 6.5Z" fill="#666"/></svg>
<div class="a" style="left:1536px;top:841px;width:70px;height:1px;background:#8a8a8a"></div>
<div class="t" style="left:1652.00px;top:816.57px;font-size:15.99px;letter-spacing:-0.412px;font-weight:normal;color:#9a9a9a;">1 – 10 of 213</div>
<svg style="left:1800px;top:819px" width="13" height="18" viewBox="0 0 13 18"><path d="M11 1.5L3 9L11 16.5" fill="none" stroke="#c4c4c4" stroke-width="2.3"/></svg>
<svg style="left:1851px;top:819px" width="13" height="18" viewBox="0 0 13 18"><path d="M2 1.5L10 9L2 16.5" fill="none" stroke="#6a6a6a" stroke-width="2.3"/></svg>
<div class="a" style="left:742px;top:28.5px;width:433px;height:68px;background:#008000;border:4px solid #f4aa12;border-radius:9px;box-shadow:0 2px 6px rgba(0,0,0,.2);z-index:8"></div>
<svg style="left:690px;top:37px;z-index:8" width="54" height="36" viewBox="0 0 54 36"><path d="M52 17.4C43 12 30 1.1 18.3 1.1A16.6 16.6 0 0 0 18.3 34.3C30 34.3 43 23 52 17.4Z" fill="#f4aa12"/></svg>
<div class="a" style="left:0;top:0;z-index:9">
<div class="t" style="left:845.00px;top:55.42px;font-size:18.17px;letter-spacing:-0.346px;font-weight:normal;color:#eefaee;">Datasheet saved successfully</div>
<div class="t" style="left:706.95px;top:44.57px;font-size:20.35px;letter-spacing:0.000px;font-weight:normal;color:#fffbe6;-webkit-text-stroke:0.3px #fffbe6;">7</div>
</div>
</body></html>
